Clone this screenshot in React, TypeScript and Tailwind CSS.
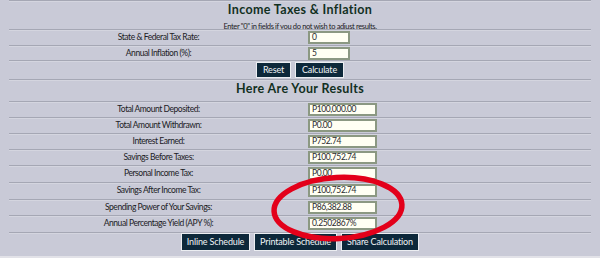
import React from "react";

const topRows: [string, string, string][] = [
  ["State & Federal Tax Rate:", "0", "h-[16px]"],
  ["Annual Inflation (%):", "5", "h-[15px]"],
];

const resultRows: [string, string, string][] = [
  ["Total Amount Deposited:", "P100,000.00", "h-[16px]"],
  ["Total Amount Withdrawn:", "P0.00", "h-[16px]"],
  ["Interest Earned:", "P752.74", "h-[16px]"],
  ["Savings Before Taxes:", "P100,752.74", "h-[16px]"],
  ["Personal Income Tax:", "P0.00", "h-[17px]"],
  ["Savings After Income Tax:", "P100,752.74", "h-[17px]"],
  ["Spending Power of Your Savings:", "P86,382.88", "h-[16px]"],
  ["Annual Percentage Yield (APY %):", "0.2502867%", "h-[17px]"],
];

function Rule() {
  return (
    <>
      <div className="h-px bg-[#a5a7b4]" />
      <div className="h-px bg-[#d4d5df]" />
    </>
  );
}

function Row({ label, value, h, wide }: { label: string; value: string; h: string; wide: boolean }) {
  return (
    <div className={`flex flex-col ${h}`}>
      <Rule />
      <div className="flex flex-1 items-start">
        <div className="w-[299px] h-[13px] flex items-center justify-center text-[8.5px] tracking-[-0.45px] text-[#202024]">
          {label}
        </div>
        <div
          className={`${wide ? "w-[69px]" : "w-[42px]"} h-[13px] border-2 border-[#8b9882] bg-[#fffff3] flex items-center pl-[2px] text-[8.5px] tracking-[-0.4px] text-[#2a2a2e] leading-none`}
        >
          {value}
        </div>
      </div>
    </div>
  );
}

function Btn({ children, w, h }: { children: React.ReactNode; w: string; h: string }) {
  return (
    <div
      className={`${w} ${h} border border-[#eceef2] bg-[#0d283a] text-[#f2f4f6] text-[9px] flex items-center justify-center tracking-[-0.15px]`}
    >
      {children}
    </div>
  );
}

export default function App() {
  return (
    <div
      className="relative w-[600px] h-[258px] overflow-hidden bg-[#c9cad7]"
      style={{ fontFamily: "Lato, 'Noto Sans', sans-serif" }}
    >
      <div className="px-[9px]">
        <Rule />
        <div className="h-[27px] flex flex-col items-center">
          <div className="text-[12.5px] leading-[13px] font-bold tracking-[0.35px] text-[#12301f] mt-px">
            Income Taxes &amp; Inflation
          </div>
          <div className="text-[7.5px] leading-[8px] tracking-[-0.35px] text-[#202024] mt-[7px]">
            Enter "0" in fields if you do not wish to adjust results.
          </div>
        </div>
        {topRows.map(([l, v, h]) => (
          <Row key={l} label={l} value={v} h={h} wide={false} />
        ))}
        <div className="flex flex-col h-[19px]">
          <Rule />
          <div className="flex justify-center gap-[4px]">
            <Btn w="w-[35px]" h="h-[16px]">Reset</Btn>
            <Btn w="w-[49px]" h="h-[16px]">Calculate</Btn>
          </div>
        </div>
        <div className="flex flex-col h-[22px]">
          <Rule />
          <div className="flex justify-center">
            <div className="text-[12.5px] leading-[13px] font-bold tracking-[0.35px] text-[#12301f] mt-[1px]">
              Here Are Your Results
            </div>
          </div>
        </div>
        {resultRows.map(([l, v, h]) => (
          <Row key={l} label={l} value={v} h={h} wide={true} />
        ))}
        <div className="flex flex-col h-[24px]">
          <Rule />
          <div className="flex justify-center gap-[4px] -mt-px">
            <Btn w="w-[69px]" h="h-[18px]">Inline Schedule</Btn>
            <Btn w="w-[83px]" h="h-[18px]">Printable Schedule</Btn>
            <Btn w="w-[78px]" h="h-[18px]">Share Calculation</Btn>
          </div>
        </div>
      </div>
      <div className="absolute left-0 right-0 bottom-0 h-[2px] bg-[#e2e2e8]" />
      <svg className="absolute left-0 top-0 pointer-events-none" width="600" height="258">
        <ellipse
          cx="338"
          cy="208"
          rx="64"
          ry="30.5"
          fill="none"
          stroke="#e3001a"
          strokeWidth="5.5"
          transform="rotate(-3 338 208)"
        />
      </svg>
    </div>
  );
}
